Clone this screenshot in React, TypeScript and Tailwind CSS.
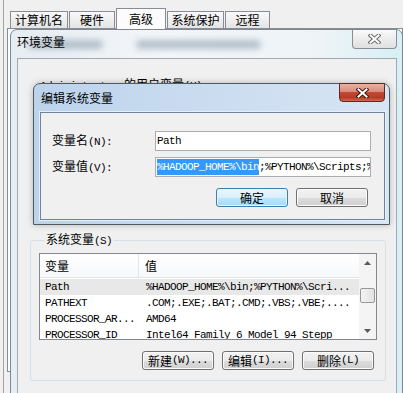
import React from "react";

const cjk = "font-['Noto_Sans_CJK_SC','Noto_Sans',sans-serif]";
const mono = "font-['Liberation_Mono','Noto_Sans_CJK_SC',monospace]";

// half-width latin part, SimSun style
function M({ children }: { children: React.ReactNode }) {
  return <span className={`${mono} text-[11px] tracking-[-0.6px]`}>{children}</span>;
}

function WinButton({
  children,
  focus,
}: {
  children: React.ReactNode;
  focus?: boolean;
}) {
  return (
    <div
      className={
        focus
          ? "flex h-[19px] w-[72px] items-center justify-center rounded-[3px] border border-[#3c7fb1] bg-[linear-gradient(#eaf6fd,#d9f0fc_50%,#bee6fd_50%,#a7d9f5)] text-[12px] leading-none shadow-[inset_0_0_0_1px_#e4f4fc]"
          : "flex h-[19px] w-[72px] items-center justify-center rounded-[3px] border border-[#707070] bg-[linear-gradient(#f2f2f2,#ebebeb_50%,#dddddd_50%,#cfcfcf)] text-[12px] leading-none shadow-[inset_0_0_0_1px_#fcfcfc]"
      }
    >
      {children}
    </div>
  );
}

function CloseX({ light }: { light?: boolean }) {
  return (
    <svg width="13" height="10" viewBox="0 0 13 10">
      <path
        d="M2.5 1.5 L10.5 8.5 M10.5 1.5 L2.5 8.5"
        stroke={light ? "#6a6a6a" : "#43140f"}
        strokeWidth="4"
        strokeLinecap="square"
      />
      <path
        d="M2.5 1.5 L10.5 8.5 M10.5 1.5 L2.5 8.5"
        stroke="#ffffff"
        strokeWidth="2"
        strokeLinecap="square"
      />
    </svg>
  );
}

const tabs = [
  { name: "计算机名", w: "w-[58px]" },
  { name: "硬件", w: "w-[46px]" },
  { name: "高级", w: "w-[50px]", active: true },
  { name: "系统保护", w: "w-[57px]" },
  { name: "远程", w: "w-[45px]" },
];

const rows = [
  ["Path", "%HADOOP_HOME%\\bin;%PYTHON%\\Scri..."],
  ["PATHEXT", ".COM;.EXE;.BAT;.CMD;.VBS;.VBE;...."],
  ["PROCESSOR_AR...", "AMD64"],
  ["PROCESSOR_ID", "Intel64 Family 6 Model 94 Stepp"],
];

export default function App() {
  return (
    <div
      className={`relative h-[393px] w-[403px] overflow-hidden bg-[#f0f0f0] text-black ${cjk}`}
    >
      {/* System properties (behind) */}
      <div className="h-full pl-[3px]">
        <div className="h-full border-l border-[#a3a3a3] pl-[3px] pt-[8px]">
          <div className="flex h-[20px] items-end gap-[1px] pl-[3px]">
            {tabs.map((t) =>
              t.active ? (
                <div
                  key={t.name}
                  className={`${t.w} relative z-10 -mb-px flex h-[21px] items-center justify-center border border-b-0 border-[#898c95] bg-[#fcfcfc] text-[12px]`}
                >
                  {t.name}
                </div>
              ) : (
                <div
                  key={t.name}
                  className={`${t.w} flex h-[17px] items-center justify-center border border-b-0 border-[#898c95] bg-[linear-gradient(#f9f9f9,#e4e4e4)] text-[12px]`}
                >
                  {t.name}
                </div>
              )
            )}
          </div>
          <div className="h-[344px] border border-[#898c95] bg-[#fcfcfc]" />
        </div>
      </div>

      {/* 环境变量 window */}
      <div className="absolute left-[10px] top-[29px] flex h-[380px] w-[393px] flex-col rounded-t-[7px] border border-[#7f8790] bg-[linear-gradient(90deg,#e6edf3,#f3f6f9_40%,#edf3f7_80%,#d6f0f5)]">
        <div className="absolute left-[17px] top-[10px] h-[9px] w-[75px] rounded-full bg-[#8c9cae]/60 blur-[3px]" />
        <div className="absolute left-[125px] top-[10px] h-[9px] w-[125px] rounded-full bg-[#8c9cae]/60 blur-[3px]" />
        <div className="relative flex h-[28px] items-start justify-between pl-[6px]">
          <span className="mt-[4px] text-[12px] leading-[16px]">环境变量</span>
          <div className="mr-[5px] flex h-[19px] w-[45px] items-center justify-center rounded-b-[4px] border border-t-0 border-[#8a8e94] bg-[linear-gradient(#fafafa,#ececec_50%,#e0e0e0)]">
            <CloseX light />
          </div>
        </div>
        <div className="ml-[6px] mr-[5px] flex-1 border border-[#a2a9b1] bg-[#f0f0f0]">
          <div className="ml-[22px] mt-[18px] text-[12px] leading-[14px]">
            <M>Administrator </M>的用户变量<M>(U)</M>
          </div>
          <fieldset className="ml-[12px] mt-[138px] w-[356px] rounded-[3px] border border-[#d5dfe5] px-[8px] pb-[10px]">
            <legend className="ml-[5px] px-[2px] text-[12px] leading-[16px]">
              系统变量<M>(S)</M>
            </legend>
            <div className="mt-[4px] flex h-[87px] border border-[#828790] bg-white">
              <div className="flex flex-1 flex-col overflow-hidden">
                <div className="flex h-[24px] shrink-0 border-b border-[#e5e5e5] bg-[linear-gradient(#ffffff,#f7f8fa)] text-[12px]">
                  <div className="flex w-[99px] items-center border-r border-[#e5e5e5] pl-[5px]">
                    变量
                  </div>
                  <div className="flex items-center pl-[6px]">值</div>
                </div>
                <div className="mt-[1px]">
                  {rows.map((r, i) => (
                    <div
                      key={r[0]}
                      className={`flex h-[16px] shrink-0 items-center whitespace-nowrap ${mono} text-[11px] tracking-[-0.6px] ${
                        i === 0 ? "bg-[#e8e8e8]" : ""
                      }`}
                    >
                      <div className="w-[99px] pl-[5px]">{r[0]}</div>
                      <div className="pl-[7px]">{r[1]}</div>
                    </div>
                  ))}
                </div>
              </div>
              <div className="flex w-[17px] flex-col bg-[#f4f4f4]">
                <div className="flex h-[17px] items-center justify-center">
                  <svg width="7" height="4" viewBox="0 0 7 4">
                    <path d="M0 4 L3.5 0 L7 4 Z" fill="#5a5a5a" />
                  </svg>
                </div>
                <div className="flex-1">
                  <div className="mx-[1px] mt-[17px] h-[15px] rounded-[2px] border border-[#979797] bg-[linear-gradient(90deg,#f4f4f4,#e2e2e2)]" />
                </div>
                <div className="flex h-[17px] items-center justify-center">
                  <svg width="7" height="4" viewBox="0 0 7 4">
                    <path d="M0 0 L7 0 L3.5 4 Z" fill="#5a5a5a" />
                  </svg>
                </div>
              </div>
            </div>
            <div className="mt-[11px] flex justify-end gap-[8px] pr-[3px]">
              <WinButton>
                新建<M>(W)...</M>
              </WinButton>
              <WinButton>
                编辑<M>(I)...</M>
              </WinButton>
              <WinButton>
                删除<M>(L)</M>
              </WinButton>
            </div>
          </fieldset>
        </div>
      </div>

      {/* 编辑系统变量 dialog */}
      <div className="absolute left-[33px] top-[83px] flex h-[142px] w-[357px] flex-col rounded-t-[7px] border border-[#4f5a67] bg-[linear-gradient(90deg,#bcd3ec,#cadcf0_50%,#d8e6f4)] shadow-[0_0_6px_rgba(0,0,0,0.25)]">
        <div className="flex h-[28px] items-start justify-between pl-[7px]">
          <span className="mt-[6px] text-[12px] leading-[16px]">编辑系统变量</span>
          <div className="-mt-px mr-[4px] flex h-[19px] w-[46px] items-center justify-center rounded-b-[4px] border border-[#5c2a22] bg-[linear-gradient(#eab2a4,#d98c7b_45%,#c24a35_50%,#b83a26_80%,#cf6a52)]">
            <CloseX />
          </div>
        </div>
        <div className="mb-[4px] ml-[6px] mr-[4px] flex-1 border border-[#6f849b] bg-[#f0f0f0] shadow-[0_0_0_1px_#e6eff8]">
          <div className="mt-[18px] flex items-center">
            <div className="w-[114px] pl-[11px] text-[12px]">
              变量名<M>(N):</M>
            </div>
            <div className="flex h-[20px] w-[216px] items-center overflow-hidden whitespace-nowrap border border-[#abadb3] bg-white px-[1px]">
              <M>Path</M>
            </div>
          </div>
          <div className="mt-[6px] flex items-center">
            <div className="w-[114px] pl-[11px] text-[12px]">
              变量值<M>(V):</M>
            </div>
            <div className="flex h-[20px] w-[216px] items-center overflow-hidden whitespace-nowrap border border-[#abadb3] bg-white px-[1px]">
              <span className={`${mono} bg-[#3399ff] text-[11px] tracking-[-0.6px] text-white`}>
                %HADOOP_HOME%\bin
              </span>
              <M>;%PYTHON%\Scripts;%</M>
            </div>
          </div>
          <div className="mt-[11px] flex gap-[8px] pl-[175px]">
            <WinButton focus>确定</WinButton>
            <WinButton>取消</WinButton>
          </div>
        </div>
      </div>
    </div>
  );
}
